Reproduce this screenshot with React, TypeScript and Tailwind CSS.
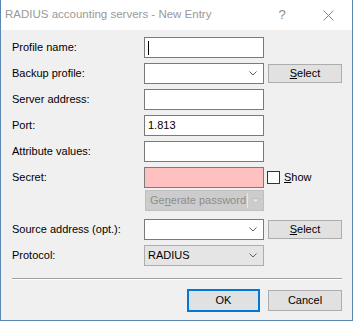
import React from "react";

const Chevron = () => (
  <svg width="8" height="5" viewBox="0 0 8 5" className="block">
    <path d="M0.5 0.5 L4 4 L7.5 0.5" fill="none" stroke="#606060" strokeWidth="1" />
  </svg>
);

const Label = ({ children }: { children: React.ReactNode }) => (
  <div className="w-[132px] shrink-0 text-black">{children}</div>
);

const TextBox = ({ value, caret, bg }: { value?: string; caret?: boolean; bg?: string }) => (
  <div
    className={`w-[120px] h-[21px] border border-[#7a7a7a] flex items-center pl-[3px] ${bg ?? "bg-white"}`}
  >
    {caret && <div className="w-px h-[14px] bg-black" />}
    {value && <span className="text-black">{value}</span>}
  </div>
);

const Combo = () => (
  <div className="w-[120px] h-[21px] border border-[#7a7a7a] bg-white flex items-center justify-end pr-[6px]">
    <Chevron />
  </div>
);

const SelectBtn = () => (
  <div className="ml-[4px] w-[74px] h-[19px] border border-[#adadad] bg-[#e1e1e1] flex items-center justify-center text-black">
    <span>
      <span className="underline underline-offset-[1px]">S</span>elect
    </span>
  </div>
);

export default function App() {
  return (
    <div
      className="w-[353px] h-[321px] bg-[#f0f0f0] border-l border-r border-b border-[#5b87b5] flex flex-col overflow-hidden"
      style={{ fontFamily: '"Liberation Sans", Arial, sans-serif' }}
    >
      {/* Title bar */}
      <div className="h-[30px] bg-white flex items-center shrink-0">
        <div className="pl-[4px] text-[11.5px] text-[#999999] flex-1">RADIUS accounting servers - New Entry</div>
        <div className="w-[14px] text-[13px] text-[#8a8a8a] mr-[34px] text-center">?</div>
        <svg width="11" height="11" viewBox="0 0 11 11" className="mr-[18px]">
          <path d="M0.5 0.5 L10.5 10.5 M10.5 0.5 L0.5 10.5" stroke="#8a8a8a" strokeWidth="1" />
        </svg>
      </div>

      {/* Form */}
      <div className="pl-[11px] pt-[7px] text-[11px] flex flex-col">
        <div className="flex flex-col gap-[5px]">
          <div className="flex items-center h-[21px]">
            <Label>Profile name:</Label>
            <TextBox caret />
          </div>
          <div className="flex items-center h-[21px]">
            <Label>Backup profile:</Label>
            <Combo />
            <SelectBtn />
          </div>
          <div className="flex items-center h-[21px]">
            <Label>Server address:</Label>
            <TextBox />
          </div>
          <div className="flex items-center h-[21px]">
            <Label>Port:</Label>
            <TextBox value="1.813" />
          </div>
          <div className="flex items-center h-[21px]">
            <Label>Attribute values:</Label>
            <TextBox />
          </div>
          <div className="flex items-center h-[21px]">
            <Label>Secret:</Label>
            <TextBox bg="bg-[#ffc0c0]" />
            <div className="ml-[3px] w-[13px] h-[13px] border border-[#333333] bg-white" />
            <span className="ml-[4px] text-black">
              <span className="underline underline-offset-[1px]">S</span>how
            </span>
          </div>
        </div>

        {/* Generate password */}
        <div className="flex items-center h-[21px] mt-[2px]">
          <div className="w-[133px] shrink-0" />
          <div className="w-[119px] h-[21px] border border-[#bfbfbf] bg-[#cccccc] flex items-center">
            <span className="pl-[4px] text-[#8d8d8d] flex-1">
              Ge<span className="underline underline-offset-[1px]">n</span>erate password
            </span>
            <div className="w-px h-[15px] bg-[#e8e8e8]" />
            <svg width="15" height="8" viewBox="0 0 15 8" className="mr-[0px]">
              <path d="M3.5 2 L11.5 2 L7.5 6 Z" fill="#e6e6e6" stroke="#a8a8a8" strokeWidth="0.5" />
            </svg>
          </div>
        </div>

        <div className="flex flex-col gap-[5px] mt-[8px]">
          <div className="flex items-center h-[21px]">
            <Label>Source address (opt.):</Label>
            <Combo />
            <SelectBtn />
          </div>
          <div className="flex items-center h-[21px]">
            <Label>Protocol:</Label>
            <div className="w-[120px] h-[21px] border border-[#adadad] bg-[#e5e5e5] flex items-center pl-[3px] pr-[6px]">
              <span className="flex-1 text-black">RADIUS</span>
              <Chevron />
            </div>
          </div>
        </div>

        {/* Separator */}
        <div className="mt-[12px] mr-[10px] h-[2px] border-t border-[#a0a0a0] border-b border-b-white" />

        {/* Buttons */}
        <div className="flex justify-end mr-[10px] mt-[9px] gap-[8px]">
          <div className="w-[73px] h-[23px] border-2 border-[#0078d7] bg-[#e1e1e1] flex items-center justify-center text-black">
            OK
          </div>
          <div className="w-[74px] h-[23px] flex items-center">
            <div className="w-[74px] h-[21px] border border-[#adadad] bg-[#e1e1e1] flex items-center justify-center text-black">
              Cancel
            </div>
          </div>
        </div>
      </div>
    </div>
  );
}
